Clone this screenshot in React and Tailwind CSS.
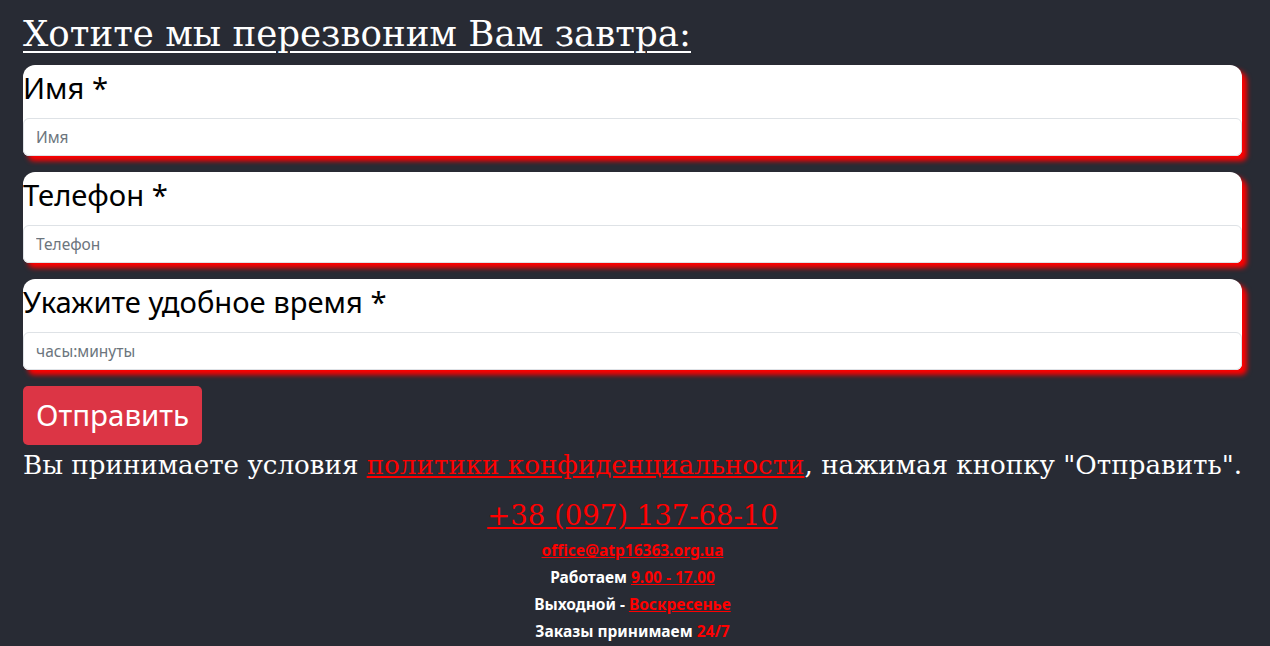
const fields = [
  { label: "Имя *", placeholder: "Имя" },
  { label: "Телефон *", placeholder: "Телефон" },
  { label: "Укажите удобное время *", placeholder: "часы:минуты" },
];

const serif = "font-['DejaVu_Serif',serif]";
const sans = "font-['Noto_Sans',sans-serif]";

export default function App() {
  return (
    <div className="min-h-[646px] bg-[#282b34] pl-[23px] pr-[28px] pt-[14px] text-white">
      <h2 className={`${serif} text-[35.6px] leading-[40px] underline underline-offset-[5px] decoration-[2px] whitespace-nowrap`}>
        Хотите мы перезвоним Вам завтра:
      </h2>

      <form className="mt-[11px] flex flex-col gap-4">
        {fields.map((f) => (
          <div
            key={f.label}
            className="flex flex-col rounded-t-xl rounded-b-md bg-white shadow-[5px_5px_5px_#ff0000]"
          >
            <label className={`${sans} h-[53px] pt-[3px] text-[29.2px] leading-[40px] text-black`}>
              {f.label}
            </label>
            <input
              type="text"
              placeholder={f.placeholder}
              className={`${sans} h-[38px] rounded-md border border-[#dee2e6] bg-white px-3 text-[15.5px] text-[#212529] placeholder:text-[#6c757d] outline-none`}
            />
          </div>
        ))}

        <div>
          <button
            type="button"
            className={`${sans} h-[59px] rounded-[5px] bg-[#dc3545] px-[13px] text-[29.5px] text-white`}
          >
            Отправить
          </button>
        </div>
      </form>

      <p className={`${serif} mt-[2px] text-[26.15px] leading-[36px] whitespace-nowrap`}>
        Вы принимаете условия{" "}
        <a href="#" className="text-[#ff0000] underline">
          политики конфиденциальности
        </a>
        , нажимая кнопку "Отправить".
      </p>

      <div className="mt-[12px] flex flex-col items-center">
        <a href="#" className={`${serif} text-[27.5px] leading-[40px] text-[#ff0000] underline`}>
          +38 (097) 137-68-10
        </a>
        <div className={`${sans} mt-[2px] flex flex-col items-center text-[15.5px] font-bold leading-[27px]`}>
          <a href="#" className="text-[#ff0000] underline">office@atp16363.org.ua</a>
          <div>
            Работаем <a href="#" className="text-[#ff0000] underline">9.00 - 17.00</a>
          </div>
          <div>
            Выходной - <a href="#" className="text-[#ff0000] underline">Воскресенье</a>
          </div>
          <div>
            Заказы принимаем <span className="text-[#ff0000]">24/7</span>
          </div>
        </div>
      </div>
    </div>
  );
}
